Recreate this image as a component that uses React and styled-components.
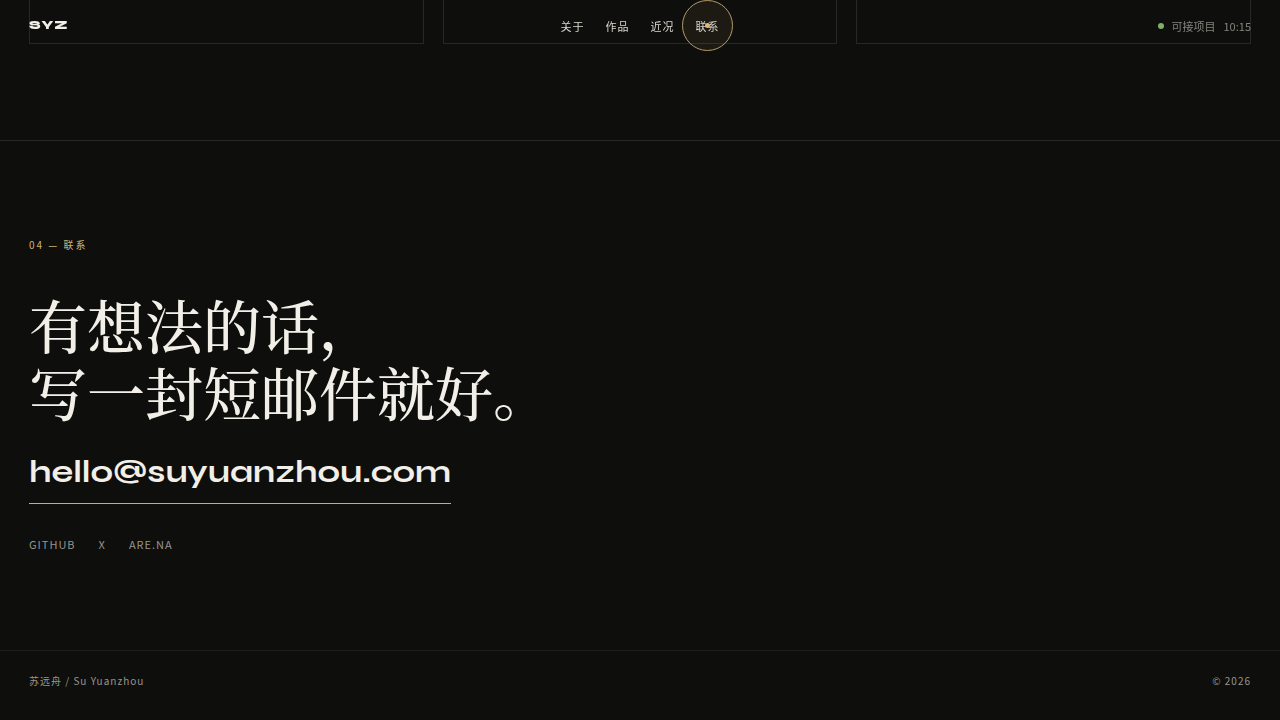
import React from "react";
import styled, { createGlobalStyle } from "styled-components";

const sans = `"Noto Sans CJK SC", "Noto Sans", sans-serif`;
const serif = `"Noto Serif CJK SC", "Noto Serif SC", "Source Han Serif SC", "Songti SC", "Noto Sans CJK SC", serif`;
const wide = `"Syne", "DejaVu Sans", sans-serif`;
const gutter = "29px";
const line = "#272725";

const GlobalStyle = createGlobalStyle`
  * { box-sizing: border-box; }
  body {
    margin: 0;
    background: #0e0e0c;
    color: #f2efe8;
    font-family: ${sans};
  }
  a { color: inherit; text-decoration: none; }
`;

const Page = styled.div`
  min-height: 100vh;
  display: flex;
  flex-direction: column;
`;

const Header = styled.header`
  position: fixed;
  z-index: 2;
  top: 0;
  left: 0;
  right: 0;
  display: grid;
  grid-template-columns: 1fr auto 1fr;
  align-items: center;
  height: 52px;
  padding: 0 ${gutter};
`;

const Logo = styled.a`
  justify-self: start;
  font: 800 11px/16px ${wide};
  letter-spacing: 1px;
`;

const Nav = styled.nav`
  display: flex;
  gap: 21px;
`;

const NavLink = styled.a`
  position: relative;
  font-size: 11px;
  line-height: 16px;
  letter-spacing: 1px;
  color: #dad7d0;
`;

const Cursor = styled.span`
  position: absolute;
  top: 50%;
  left: 50%;
  width: 51px;
  height: 51px;
  margin: -26px 0 0 -26px;
  display: grid;
  place-items: center;
  border: 1px solid #b39a68;
  border-radius: 50%;
  background: rgba(216, 184, 120, 0.08);
  pointer-events: none;

  &::after {
    content: "";
    width: 5px;
    height: 5px;
    border-radius: 50%;
    background: #e0b870;
  }
`;

const Status = styled.div`
  justify-self: end;
  display: flex;
  align-items: center;
  gap: 8px;
  font-size: 11px;
  line-height: 16px;
  color: #85837d;
`;

const Dot = styled.span`
  width: 6px;
  height: 6px;
  border-radius: 50%;
  background: #7fb069;
`;

const Cards = styled.section`
  display: grid;
  grid-template-columns: repeat(3, 1fr);
  gap: 19px;
  padding: 0 ${gutter} 96px;
`;

const Card = styled.article`
  height: 44px;
  border: 1px solid ${line};
  border-top: 0;
`;

const Contact = styled.section`
  display: flex;
  flex-direction: column;
  align-items: flex-start;
  padding: 96px ${gutter};
  border-top: 1px solid ${line};
`;

const Label = styled.p`
  margin: 0;
  font-size: 10px;
  line-height: 16px;
  letter-spacing: 2px;
  color: #d0b27a;
`;

const Title = styled.h2`
  margin: 38px 0 0;
  font: 500 58px/67px ${serif};
`;

const Email = styled.a`
  margin-top: 27px;
  padding-bottom: 11px;
  border-bottom: 1px solid #c9ab74;
  font: 700 32px/40px ${wide};
`;

const Socials = styled.div`
  display: flex;
  gap: 23px;
  margin: 32px 0 2px;
`;

const Social = styled.a`
  font-size: 11px;
  line-height: 16px;
  letter-spacing: 1px;
  color: #98958e;
`;

const Footer = styled.footer`
  flex: 1;
  display: flex;
  justify-content: space-between;
  align-items: flex-start;
  padding: 22px ${gutter};
  border-top: 1px solid #1e1e1c;
  font-size: 10px;
  line-height: 16px;
  letter-spacing: 1px;
  color: #98958e;
`;

export default function App() {
  return (
    <Page>
      <GlobalStyle />
      <Header>
        <Logo href="#top">SYZ</Logo>
        <Nav>
          <NavLink href="#about">关于</NavLink>
          <NavLink href="#work">作品</NavLink>
          <NavLink href="#now">近况</NavLink>
          <NavLink href="#contact">
            联系
            <Cursor />
          </NavLink>
        </Nav>
        <Status>
          <Dot />
          <span>可接项目</span>
          <time>10:15</time>
        </Status>
      </Header>
      <main>
        <Cards id="now">
          <Card />
          <Card />
          <Card />
        </Cards>
        <Contact id="contact">
          <Label>04 — 联系</Label>
          <Title lang="zh-CN">
            有想法的话，
            <br />
            写一封短邮件就好。
          </Title>
          <Email href="mailto:hello@suyuanzhou.com">hello@suyuanzhou.com</Email>
          <Socials>
            <Social href="#github">GITHUB</Social>
            <Social href="#x">X</Social>
            <Social href="#arena">ARE.NA</Social>
          </Socials>
        </Contact>
      </main>
      <Footer>
        <span>苏远舟 / Su Yuanzhou</span>
        <span>© 2026</span>
      </Footer>
    </Page>
  );
}
